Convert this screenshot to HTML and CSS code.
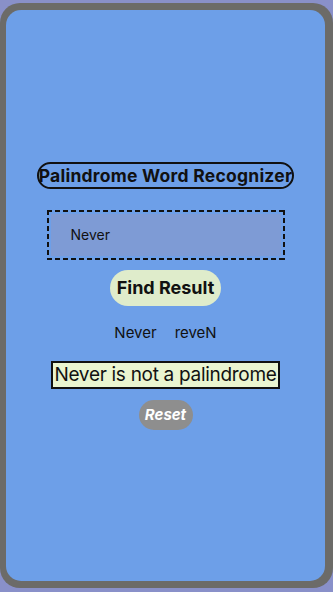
FILE: index.html
```html
<!DOCTYPE html>
<html lang="en">
<head>
<meta charset="utf-8">
<title>Palindrome Word Recognizer</title>
<link rel="stylesheet" href="styles.css">
</head>
<body>
<div class="bezel">
  <main class="screen">
    <h1 class="title">Palindrome Word Recognizer</h1>
    <div class="input-wrap">
      <div class="input">Never</div>
    </div>
    <button class="find-btn" type="button">Find Result</button>
    <div class="words">
      <span class="word">Never</span>
      <span class="word">reveN</span>
    </div>
    <div class="result">Never is not a palindrome</div>
    <button class="reset-btn" type="button">Reset</button>
  </main>
</div>
</body>
</html>
```
FILE: styles.css
```css
* { box-sizing: border-box; }
html, body {
  margin: 0;
  padding: 0;
  background: #8990c9;
  height: 592px;
  overflow: hidden;
}
body {
  font-family: Inter, "Noto Sans", sans-serif;
  color: #111;
  padding-top: 3px;
}
.bezel {
  height: 585px;
  width: 333px;
  background: #6c6b68;
  border-radius: 20px;
  padding: 7px 8px 7px 6px;
}
.screen {
  height: 100%;
  background: #6d9fe8;
  border-radius: 15px;
  display: flex;
  flex-direction: column;
  align-items: center;
  justify-content: center;
}
.title {
  margin: 0;
  font-size: 17.5px;
  font-weight: 700;
  line-height: 23px;
  border: 2px solid #111;
  border-radius: 14px;
  padding: 0;
  letter-spacing: 0.25px;
}
.input-wrap {
  margin-top: 21px;
  width: 238px;
  height: 50px;
  padding: 4px;
  background:
    repeating-linear-gradient(90deg, #111 0 5px, transparent 5px 8px) top left / 100% 2px no-repeat,
    repeating-linear-gradient(90deg, #111 0 5px, transparent 5px 8px) bottom left / 100% 2px no-repeat,
    repeating-linear-gradient(180deg, #111 0 5px, transparent 5px 8px) top left / 2px 100% no-repeat,
    repeating-linear-gradient(180deg, #111 0 5px, transparent 5px 8px) top right / 2px 100% no-repeat;
}
.input {
  height: 100%;
  background: #7e9bd5;
  font-size: 14px;
  display: flex;
  align-items: center;
  padding-left: 20px;
  color: #111;
}
.find-btn {
  margin-top: 10px;
  width: 111px;
  height: 36px;
  border: 0;
  border-radius: 18px;
  background: #dfeccb;
  font-family: inherit;
  font-size: 18px;
  font-weight: 700;
  color: #111;
  padding: 0;
}
.words {
  margin-top: 18px;
  display: flex;
  gap: 18px;
  font-size: 15px;
  line-height: 18px;
}
.result {
  margin-top: 19px;
  border: 2px solid #111;
  background: #eaf5d0;
  font-size: 19px;
  line-height: 24px;
  letter-spacing: -0.3px;
  padding: 0 1px;
}
.reset-btn {
  margin-top: 11px;
  width: 54px;
  height: 30px;
  border: 0;
  border-radius: 15px;
  background: #8e8e8e;
  color: #fff;
  font-family: inherit;
  font-size: 15px;
  font-weight: 700;
  font-style: italic;
  padding: 0;
}
```
